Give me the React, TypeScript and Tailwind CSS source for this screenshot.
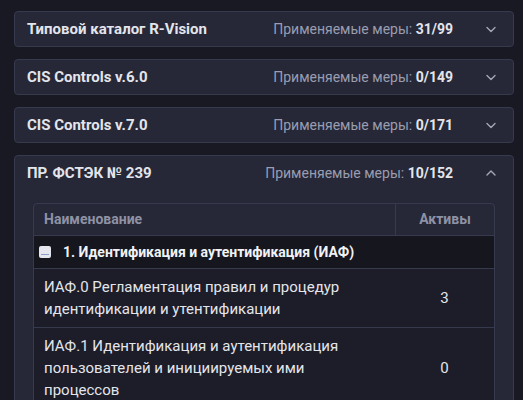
import React from 'react';

const CATALOGS = [
  { title: 'Типовой каталог R-Vision', applied: '31/99' },
  { title: 'CIS Controls v.6.0', applied: '0/149' },
  { title: 'CIS Controls v.7.0', applied: '0/171' },
];

const ROWS = [
  { name: 'ИАФ.0 Регламентация правил и процедур идентификации и утентификации', assets: 3 },
  { name: 'ИАФ.1 Идентификация и аутентификация пользователей и инициируемых ими процессов', assets: 0 },
];

function Chevron({ up = false }: { up?: boolean }) {
  return (
    <svg viewBox="0 0 12 12" width="12" height="12" fill="none" stroke="#a4a7b8" strokeWidth="1.4" strokeLinecap="round" strokeLinejoin="round">
      {up ? <path d="M2 8l4-4 4 4" /> : <path d="M2 4.5l4 4 4-4" />}
    </svg>
  );
}

function PanelHeader({ title, applied, open }: { title: string; applied: string; open?: boolean }) {
  return (
    <div className="flex items-center h-[34px] pl-[12px] pr-[16px]">
      <span className="text-[15px] font-bold text-[#e4e5ec]">{title}</span>
      <span className="ml-auto text-[14px] text-[#9a9db0]">
        Применяемые меры: <span className="font-bold text-[#e4e5ec]">{applied}</span>
      </span>
      <span className="ml-[32px] flex items-center"><Chevron up={open} /></span>
    </div>
  );
}

export default function App() {
  return (
    <div className="min-h-[400px] bg-[#181923] pt-[11px] pl-[14px]" style={{ fontFamily: 'Roboto, "Noto Sans", sans-serif' }}>
      <div className="w-[500px] flex flex-col gap-[12px]">
        {CATALOGS.map((c) => (
          <div key={c.title} className="rounded-[4px] border border-[#373a4c] bg-[#262837]">
            <PanelHeader title={c.title} applied={c.applied} />
          </div>
        ))}
        <div className="rounded-[4px] border border-[#373a4c] bg-[#262837] pb-[18px]">
          <PanelHeader title="ПР. ФСТЭК № 239" applied="10/152" open />
          <div className="mx-[18px] mt-[13px] rounded-t-[4px] border border-[#373a4c] overflow-hidden">
            <div className="flex h-[32px] border-b border-[#373a4c] text-[14px] font-bold text-[#8f92a4]">
              <div className="flex-1 flex items-center pl-[10px]">Наименование</div>
              <div className="w-[99px] flex items-center justify-center border-l border-[#373a4c]">Активы</div>
            </div>
            <div className="flex items-center h-[33px] bg-[#15161e] border-b border-[#373a4c] pl-[5px]">
              <span className="w-[12px] h-[12px] rounded-[2px] bg-[#e6e7ee] flex items-end justify-center pb-[3px]">
                <span className="w-[8px] h-[1.5px] bg-[#8aa0cc]" />
              </span>
              <span className="ml-[12px] text-[14px] font-bold text-[#f1f2f6]">1. Идентификация и аутентификация (ИАФ)</span>
            </div>
            {ROWS.map((r, i) => (
              <div key={i} className="flex bg-[#1c1d28] border-b border-[#373a4c]">
                <div className="flex-1 pl-[10px] pr-[30px] py-[7px] text-[15px] leading-[22px] text-[#e4e5ec]">{r.name}</div>
                <div className="w-[99px] flex items-center justify-center text-[15px] text-[#e4e5ec]">{r.assets}</div>
              </div>
            ))}
          </div>
        </div>
      </div>
    </div>
  );
}
